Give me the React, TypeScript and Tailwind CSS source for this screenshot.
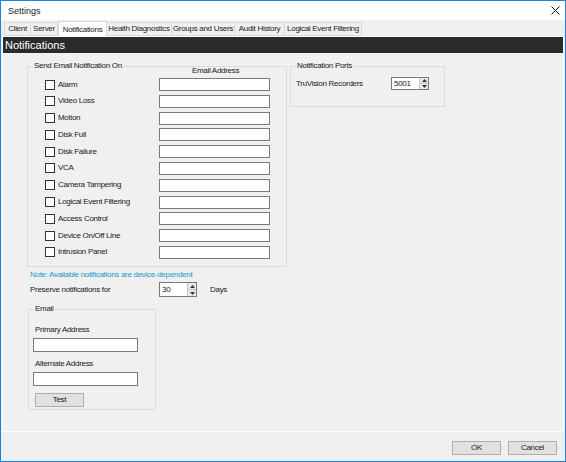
import React from "react";

const rows = [
  "Alarm",
  "Video Loss",
  "Motion",
  "Disk Full",
  "Disk Failure",
  "VCA",
  "Camera Tampering",
  "Logical Event Filtering",
  "Access Control",
  "Device On/Off Line",
  "Intrusion Panel",
];

const tabs = [
  { name: "Client", w: "w-[27px]" },
  { name: "Server", w: "w-[27px]" },
  { name: "Notifications", w: "w-[49px]", active: true },
  { name: "Health Diagnostics", w: "w-[65px]" },
  { name: "Groups and Users", w: "w-[63px]" },
  { name: "Audit History", w: "w-[50px]" },
  { name: "Logical Event Filtering", w: "w-[77px]" },
];

function Arrows() {
  return (
    <div className="flex w-[9px] flex-col border-l border-[#c8c8c8] bg-[#e9e9e9]">
      <div className="flex flex-1 items-center justify-center border-b border-[#c8c8c8]">
        <svg width="5" height="3" viewBox="0 0 5 3">
          <path d="M0 3 L2.5 0 L5 3 Z" fill="#333" />
        </svg>
      </div>
      <div className="flex flex-1 items-center justify-center">
        <svg width="5" height="3" viewBox="0 0 5 3">
          <path d="M0 0 L2.5 3 L5 0 Z" fill="#333" />
        </svg>
      </div>
    </div>
  );
}

function GroupBox({
  label,
  className,
  children,
}: {
  label: string;
  className: string;
  children?: React.ReactNode;
}) {
  return (
    <fieldset className={`border border-[#dcdcdc] ${className}`}>
      <legend className="ml-[5px] px-[1px] leading-[10px]">{label}</legend>
      {children}
    </fieldset>
  );
}

const button =
  "flex h-[14px] w-[49px] items-center justify-center border border-[#adadad] bg-[#e1e1e1]";

export default function App() {
  return (
    <div
      className="flex h-[462px] w-[566px] flex-col whitespace-nowrap border border-[#1883d7] bg-[#f0f0f0] text-[8px] leading-[10px] tracking-[-0.3px] text-[#1a1a1a]"
      style={{ fontFamily: '"Liberation Sans", Arial, sans-serif' }}
    >
      {/* title bar */}
      <div className="flex h-[19px] items-center justify-between bg-white pl-[7px] pr-[5px]">
        <span className="text-[9px] tracking-normal">Settings</span>
        <svg width="9" height="9" viewBox="0 0 9 9">
          <path d="M0.5 0.5 L8.5 8.5 M8.5 0.5 L0.5 8.5" stroke="#111" strokeWidth="1" />
        </svg>
      </div>

      {/* tabs */}
      <div className="flex h-[16px] items-end pl-[3px]">
        {tabs.map((t) =>
          t.active ? (
            <div
              key={t.name}
              className={`${t.w} -mb-px flex h-[16px] items-center justify-center border border-b-0 border-[#d9d9d9] bg-white`}
            >
              {t.name}
            </div>
          ) : (
            <div
              key={t.name}
              className={`${t.w} flex h-[14px] items-center justify-center border border-l-0 border-[#d9d9d9] first:border-l`}
            >
              {t.name}
            </div>
          )
        )}
      </div>

      {/* tab page */}
      <div className="mx-[1px] flex h-[396px] flex-col border border-white bg-[#f0f0f0]">
        <div className="flex h-[16px] items-center bg-[#2b2b2b] pl-[2px] text-[11px] leading-[14px] tracking-normal text-white">
          Notifications
        </div>

        <div className="flex pl-[24px] pt-[8px]">
          <div className="flex flex-col">
            <GroupBox label="Send Email Notification On" className="h-[206px] w-[260px]">
              <div className="-mt-[5px] mb-[2px] ml-[132px] w-[111px] text-center">
                Email Address
              </div>
              <div className="flex flex-col gap-[3.8px]">
                {rows.map((r) => (
                  <div key={r} className="flex h-[13px] items-center">
                    <div className="ml-[17px] h-[10px] w-[10px] border border-[#333] bg-white" />
                    <span className="ml-[3px] w-[101px]">{r}</span>
                    <div className="h-[13px] w-[111px] border border-[#7a7a7a] bg-white" />
                  </div>
                ))}
              </div>
            </GroupBox>

            <div className="ml-[3px] mt-[3px] text-[#1e9ac4]">
              Note: Available notifications are device-dependent
            </div>
            <div className="ml-[3px] mt-[2px] flex items-center">
              <span className="w-[129px]">Preserve notifications for</span>
              <div className="flex h-[15px] w-[38px] border border-[#7a7a7a] bg-white">
                <span className="flex-1 pl-[2px] leading-[13px]">30</span>
                <Arrows />
              </div>
              <span className="ml-[13px]">Days</span>
            </div>

            <GroupBox label="Email" className="ml-[1px] mt-[7px] h-[106px] w-[128px]">
              <div className="ml-[6px] mt-[11px]">Primary Address</div>
              <div className="ml-[4px] mt-[3px] h-[14px] w-[105px] border border-[#7a7a7a] bg-white" />
              <div className="ml-[6px] mt-[7px]">Alternate Address</div>
              <div className="ml-[4px] mt-[3px] h-[14px] w-[105px] border border-[#7a7a7a] bg-white" />
              <div className={`${button} ml-[6px] mt-[7px]`}>Test</div>
            </GroupBox>
          </div>

          <GroupBox label="Notification Ports" className="ml-[3px] h-[46px] w-[155px]">
            <div className="mt-[6px] flex items-center pl-[5px]">
              <span className="w-[95px]">TruVision Recorders</span>
              <div className="flex h-[13px] w-[38px] border border-[#7a7a7a] bg-white">
                <span className="flex-1 pl-[2px] leading-[11px]">5001</span>
                <Arrows />
              </div>
            </div>
          </GroupBox>
        </div>
      </div>

      {/* footer */}
      <div className="flex flex-1 items-start justify-end gap-[7px] pr-[8px] pt-[9px]">
        <div className={button}>OK</div>
        <div className={button}>Cancel</div>
      </div>
    </div>
  );
}
